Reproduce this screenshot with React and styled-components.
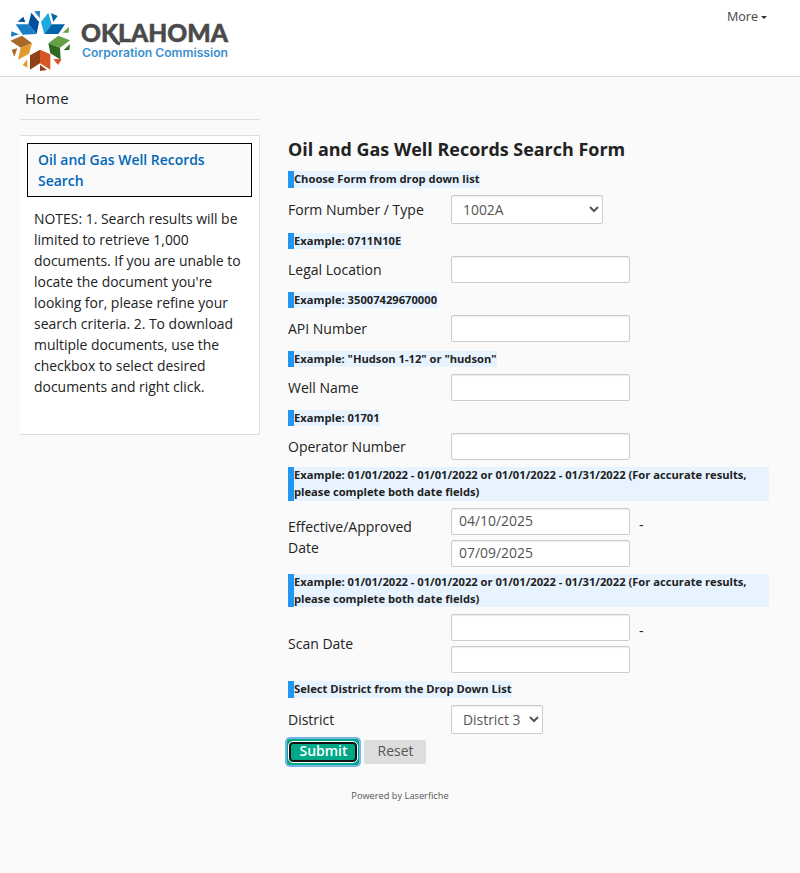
import React from "react";
import styled, { createGlobalStyle } from "styled-components";

const GlobalStyle = createGlobalStyle`
  *, *::before, *::after { box-sizing: border-box; }
  body {
    margin: 0;
    min-height: 100vh;
    background: #fafafa;
    color: #222;
    font: 14px/21px "Open Sans", sans-serif;
  }
`;

const Header = styled.header`
  display: flex;
  justify-content: space-between;
  align-items: flex-start;
  height: 77px;
  background: #fff;
  border-bottom: 1px solid #ddd;
`;

const MoreButton = styled.button`
  display: flex;
  align-items: center;
  gap: 3px;
  margin: 7px 33px 0 0;
  padding: 0;
  border: 0;
  background: none;
  color: #444;
  font: 12.6px/20px "Open Sans", sans-serif;
`;

const Caret = styled.span`
  border: 3px solid transparent;
  border-top-color: #333;
  border-bottom: 0;
`;

const Layout = styled.div`
  display: flex;
  align-items: flex-start;
  gap: 28px;
  padding-left: 20px;
`;

const Sidebar = styled.aside`
  width: 240px;
`;

const Nav = styled.nav`
  height: 43px;
  padding: 11px 5px 0;
  border-bottom: 1px solid #ddd;
  font-size: 15px;
  letter-spacing: 0.4px;
`;

const Panel = styled.section`
  height: 300px;
  margin-top: 15px;
  padding: 7px 7px 0;
  background: #fff;
  border: 1px solid #ddd;
  border-left: 0;
`;

const PanelLink = styled.a`
  display: block;
  height: 54px;
  padding: 5px 10px;
  border: 1px solid #000;
  background: #fafafa;
  color: #0067b8;
  font-size: 13.95px;
  font-weight: 600;
`;

const Notes = styled.p`
  margin: 11px 0 0 7px;
  width: 212px;
  font-size: 13.95px;
`;

const Form = styled.form`
  width: 481px;
  padding-top: 57px;
`;

const Title = styled.h1`
  margin: 0;
  height: 37px;
  font-size: 17.95px;
  line-height: 30px;
  font-weight: 700;
`;

const Hint = styled.div`
  width: fit-content;
  height: ${(p) => p.$height}px;
  border-left: 6px solid #2196f3;
  background: #e7f3ff;
  font-size: 11.18px;
  line-height: 16.8px;
  font-weight: 700;
`;

const Row = styled.div`
  display: grid;
  grid-template-columns: 163px 1fr;
  align-items: center;
  margin: 7px 0 ${(p) => p.$after}px;
`;

const Label = styled.label`
  padding: 0 20px ${(p) => p.$lift || 0}px 0;
`;

const Fields = styled.div`
  display: grid;
  grid-template-columns: 179px 1fr;
  column-gap: 9px;
  row-gap: 5px;
`;

const Input = styled.input`
  width: 179px;
  height: 27px;
  padding: 0 7px 2px;
  border: 1px solid #ccc;
  border-radius: 2px;
  background: #fff;
  box-shadow: inset 0 1px 1px rgba(0, 0, 0, 0.075);
  color: #555;
  font: 13.95px "Open Sans", sans-serif;
  outline: none;
`;

const Dash = styled.span`
  padding-top: 6px;
`;

const Select = styled.select`
  width: ${(p) => p.$width}px;
  height: 29px;
  padding: 0 0 0 7px;
  border: 1px solid #ccc;
  border-radius: 2px;
  background: #fff;
  box-shadow: inset 0 1px 1px rgba(0, 0, 0, 0.075);
  color: #555;
  font: 13.9px "Open Sans", sans-serif;
`;

const Actions = styled.div`
  display: flex;
  gap: 6px;
`;

const Button = styled.button`
  width: ${(p) => p.$width}px;
  height: 24px;
  padding: 0 0 2px 1px;
  border: 0;
  border-radius: 2px;
  background: #ddd;
  color: #555;
  font: 500 14px/20px "Open Sans", sans-serif;
`;

const SubmitButton = styled(Button)`
  height: 20px;
  border: 2px solid #101010;
  border-radius: 4px;
  outline: 1px solid #fff;
  background: #00a887;
  color: #fff;
  line-height: 14px;
  font-weight: 600;
`;

const FocusFrame = styled.div`
  display: flex;
  align-items: center;
  justify-content: center;
  width: 70px;
  height: 24px;
  border-radius: 2px;
  background: #00a887;
  box-shadow: 0 0 0 1px #00a887, 0 0 0 3px #75b5e7;
`;

const Footer = styled.footer`
  margin-top: 24px;
  text-align: center;
  font-size: 9.25px;
  line-height: 16px;
  color: #555;
`;

const LogoSvg = styled.svg`
  display: block;
  width: 240px;
  height: 76px;
`;

const STAR = [
  ["#004f9e", "94,38 117,66 110,102 85,73"],
  ["#1b7fc7", "47,73 85,73 110,102 68,104"],
  ["#1da9e1", "145,38 155,73 133,102 123,66"],
  ["#0064a8", "155,73 195,73 175,102 133,102"],
  ["#66a044", "145,130 175,107 210,121 180,143"],
  ["#2f6a22", "145,130 180,143 182,179 151,160"],
  ["#923f17", "90,166 120,149 120,190 90,209"],
  ["#d75724", "120,149 151,163 151,209 120,190"],
  ["#a86a2b", "31,122 66,107 96,130 62,143"],
  ["#e29a2c", "62,143 96,130 87,161 54,179"],
  ["#004f9e", "53,65 70,50 76,66"],
  ["#1b7fc7", "103,34 120,33 119,55"],
  ["#0064a8", "153,39 173,48 160,65"],
  ["#66a044", "207,80 206,98 188,98"],
  ["#2f6a22", "191,151 210,132 208,150"],
  ["#d75724", "160,177 185,178 174,195"],
  ["#923f17", "120,194 141,210 120,213"],
  ["#e29a2c", "82,178 82,203 68,195"],
  ["#a86a2b", "35,149 52,145 43,170"],
  ["#1b7fc7", "34,94 57,103 33,110"],
];

function Logo() {
  return (
    <LogoSvg viewBox="0 0 240 76" role="img" aria-label="Oklahoma Corporation Commission">
      <g transform="scale(.333333)">
        {STAR.map(([fill, points]) => (
          <polygon key={points} fill={fill} points={points} />
        ))}
      </g>
      <text x="81" y="41.5" textLength="147" lengthAdjust="spacingAndGlyphs" fontFamily="Lato, sans-serif" fontWeight="900" fontSize="25.5" fill="#4a4a4c" stroke="#4a4a4c" strokeWidth="0.5">
        OKLAHOMA
      </text>
      <path d="M111 35 L117 43 L120 44" fill="none" stroke="#4a4a4c" strokeWidth="3" />
      <text x="82" y="56.5" textLength="146" lengthAdjust="spacingAndGlyphs" fontFamily="Inter, sans-serif" fontWeight="600" fontSize="11.5" fill="#3a8fcf">
        Corporation Commission
      </text>
    </LogoSvg>
  );
}

const DATE_HINT =
  "Example: 01/01/2022 - 01/01/2022 or 01/01/2022 - 01/31/2022 (For accurate results, please complete both date fields)";

const TEXT_FIELDS = [
  { hint: "Example: 0711N10E", label: "Legal Location", after: 9 },
  { hint: "Example: 35007429670000", label: "API Number", after: 9 },
  { hint: 'Example: "Hudson 1-12" or "hudson"', label: "Well Name", after: 9 },
  { hint: "Example: 01701", label: "Operator Number", after: 7 },
];

function DateRange({ hintHeight, label, from, to, after, lift }) {
  return (
    <>
      <Hint $height={hintHeight}>{DATE_HINT}</Hint>
      <Row $after={after}>
        <Label $lift={lift}>{label}</Label>
        <Fields>
          <Input defaultValue={from} />
          <Dash>-</Dash>
          <Input defaultValue={to} />
        </Fields>
      </Row>
    </>
  );
}

export default function App() {
  return (
    <>
      <GlobalStyle />
      <Header>
        <Logo />
        <MoreButton>
          More <Caret />
        </MoreButton>
      </Header>
      <Layout>
        <Sidebar>
          <Nav>Home</Nav>
          <Panel>
            <PanelLink>Oil and Gas Well Records Search</PanelLink>
            <Notes>
              NOTES: 1. Search results will be limited to retrieve 1,000 documents. If you are
              unable to locate the document you're looking for, please refine your search
              criteria. 2. To download multiple documents, use the checkbox to select desired
              documents and right click.
            </Notes>
          </Panel>
        </Sidebar>
        <Form onSubmit={(e) => e.preventDefault()}>
          <Title>Oil and Gas Well Records Search Form</Title>
          <Hint $height={17}>Choose Form from drop down list</Hint>
          <Row $after={9}>
            <Label>Form Number / Type</Label>
            <Select $width={152}>
              <option>1002A</option>
            </Select>
          </Row>
          {TEXT_FIELDS.map((f) => (
            <React.Fragment key={f.label}>
              <Hint $height={16}>{f.hint}</Hint>
              <Row $after={f.after}>
                <Label>{f.label}</Label>
                <Input />
              </Row>
            </React.Fragment>
          ))}
          <DateRange hintHeight={34} label="Effective/Approved Date" from="04/10/2025" to="07/09/2025" after={7} lift={2} />
          <DateRange hintHeight={33} label="Scan Date" after={8} />
          <Hint $height={17}>Select District from the Drop Down List</Hint>
          <Row $after={6}>
            <Label>District</Label>
            <Select $width={92}>
              <option>District 3</option>
            </Select>
          </Row>
          <Actions>
            <FocusFrame>
              <SubmitButton $width={68}>Submit</SubmitButton>
            </FocusFrame>
            <Button type="reset" $width={62}>Reset</Button>
          </Actions>
        </Form>
      </Layout>
      <Footer>Powered by Laserfiche</Footer>
    </>
  );
}
